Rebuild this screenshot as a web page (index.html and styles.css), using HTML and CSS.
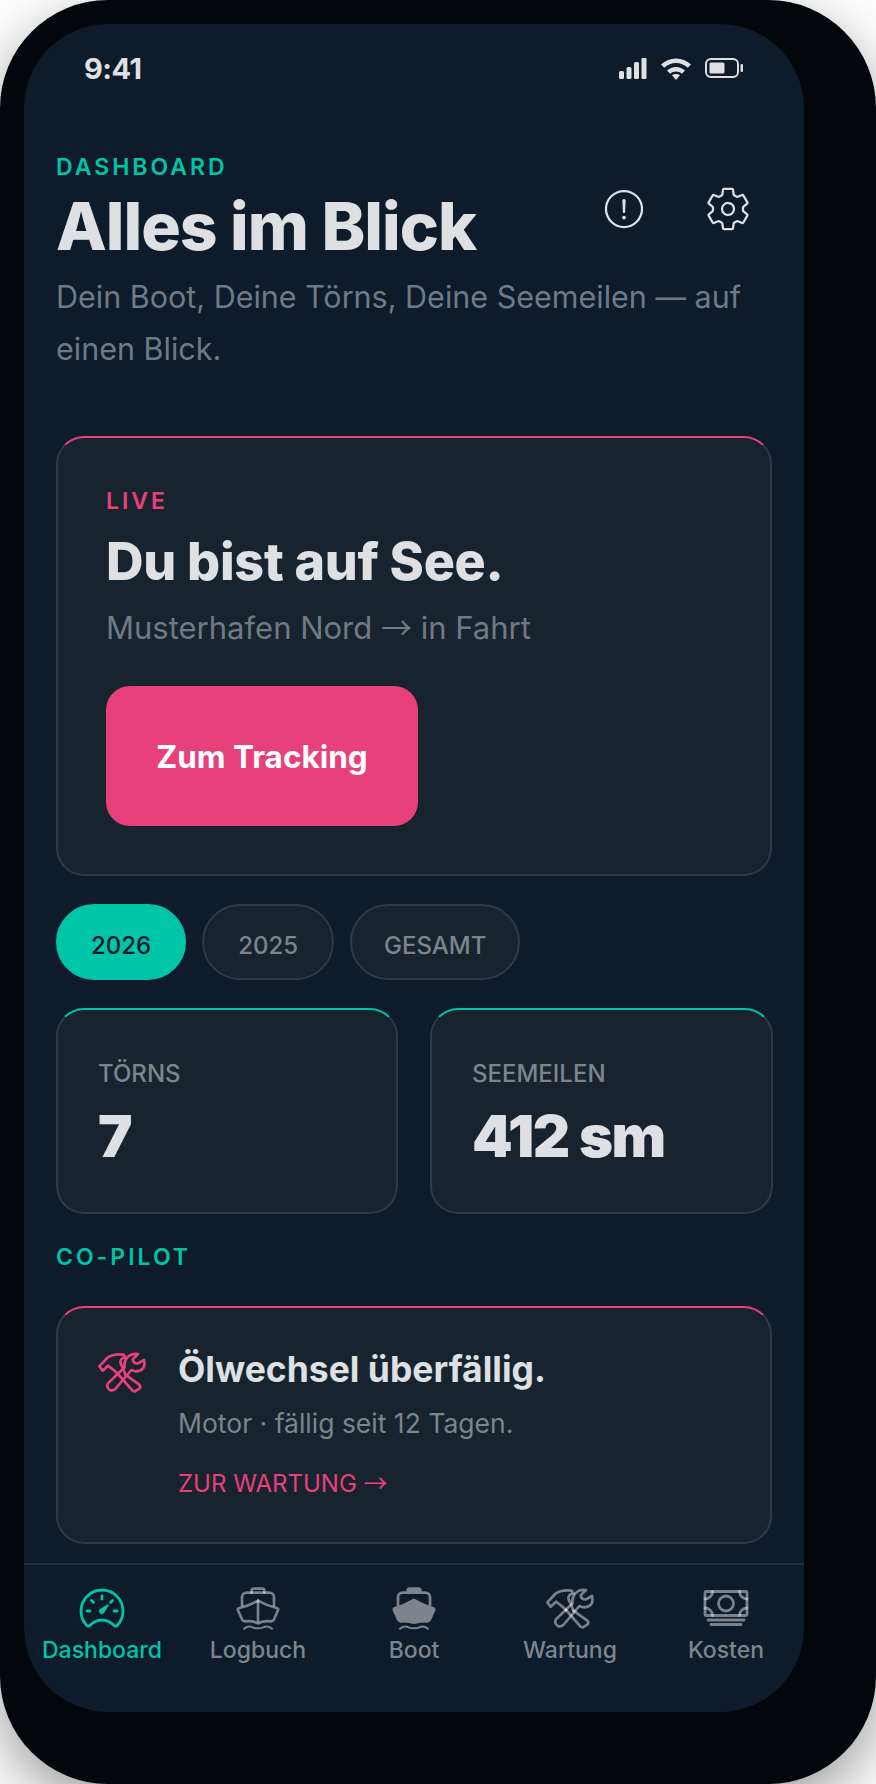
FILE: index.html
```html
<!DOCTYPE html>
<html lang="de">

<head>
  <meta charset="utf-8" />
  <meta name="viewport" content="width=device-width, initial-scale=1.0">
  <title>Dashboard</title>
  <link rel="stylesheet" href="styles.css">
</head>

<body>
  <div class="phone">
    <div class="screen">
      <div class="status-bar">
        <span class="status-time">9:41</span>
        <div class="status-icons">
          <svg class="ico-signal" viewBox="0 0 28 21"><rect x="0" y="13" width="5" height="8" rx="1.5"/><rect x="7.5" y="9" width="5" height="12" rx="1.5"/><rect x="15" y="4" width="5" height="17" rx="1.5"/><rect x="22.5" y="0" width="5" height="21" rx="1"/></svg>
          <svg class="ico-wifi" viewBox="0 0 32 24"><path d="M1 8.500C9.500 .5 22.500 .5 31 8.500L27.800 11.800C21 5.500 11 5.500 4.200 11.800Z"/><path d="M7 14.500C12 9.800 20 9.800 25 14.500L21.800 17.700C18.500 14.700 13.500 14.700 10.200 17.700Z"/><path d="M12 19.300C14.300 17.500 17.700 17.500 20 19.300L16 24Z"/></svg>
          <svg class="ico-battery" viewBox="0 0 38 20"><rect class="battery-shell" x="1" y="1" width="32" height="18" rx="5"/><rect x="4.500" y="4.500" width="15" height="11" rx="1.500"/><rect x="35.500" y="6" width="2.500" height="8" rx="1"/></svg>
        </div>
      </div>

      <div class="content">
        <div class="page-head">
          <div>
            <div class="kicker">DASHBOARD</div>
            <h1 class="page-title">Alles im Blick</h1>
          </div>
          <div class="head-actions">
            <a class="head-button">
              <svg class="ico-head" viewBox="0 0 512 512"><path d="M448 256c0-106-86-192-192-192S64 150 64 256s86 192 192 192 192-86 192-192z"/><path d="M250.260 166.050L256 288l5.730-121.950a5.740 5.740 0 00-5.790-6h0a5.740 5.740 0 00-5.680 6z"/><path class="dot" d="M256 367.910a20 20 0 1120-20 20 20 0 01-20 20z"/></svg>
            </a>
            <a class="head-button">
              <svg class="ico-head" viewBox="0 0 512 512"><path d="M262.290 192.310a64 64 0 1057.400 57.400 64.130 64.130 0 00-57.400-57.400zM416.390 256a154.340 154.340 0 01-1.530 20.790l45.210 35.460a10.810 10.810 0 012.450 13.750l-42.770 74a10.810 10.810 0 01-13.140 4.590l-44.900-18.080a16.110 16.110 0 00-15.170 1.750A164.480 164.480 0 01325 400.800a15.940 15.940 0 00-8.820 12.140l-6.730 47.890a11.080 11.080 0 01-10.680 9.170h-85.540a11.110 11.110 0 01-10.690-8.870l-6.720-47.820a16.070 16.070 0 00-9-12.220 155.300 155.300 0 01-21.460-12.570 16 16 0 00-15.110-1.710l-44.890 18.070a10.810 10.810 0 01-13.140-4.580l-42.770-74a10.800 10.800 0 012.450-13.750l38.210-30a16.050 16.050 0 006-14.080c-.36-4.170-.58-8.330-.58-12.500s.21-8.270.58-12.350a16 16 0 00-6.070-13.940l-38.190-30A10.810 10.810 0 0149.480 186l42.770-74a10.810 10.810 0 0113.140-4.590l44.900 18.080a16.110 16.110 0 0015.170-1.750A164.480 164.480 0 01187 111.200a15.940 15.940 0 008.820-12.140l6.730-47.890A11.080 11.080 0 01213.230 42h85.540a11.110 11.110 0 0110.690 8.870l6.720 47.820a16.070 16.070 0 009 12.220 155.300 155.300 0 0121.460 12.570 16 16 0 0015.110 1.710l44.890-18.070a10.810 10.810 0 0113.140 4.580l42.770 74a10.800 10.800 0 01-2.450 13.750l-38.210 30a16.050 16.050 0 00-6.100 14.080c.33 4.140.55 8.300.55 12.470z"/></svg>
            </a>
          </div>
        </div>
        <p class="page-sub">Dein Boot, Deine Törns, Deine Seemeilen — auf einen Blick.</p>

        <div class="card card-live">
          <div class="live-tag">LIVE</div>
          <h2 class="live-title">Du bist auf See.</h2>
          <p class="live-sub">Musterhafen Nord <span class="arrow">→</span> in Fahrt</p>
          <a class="live-button">Zum Tracking</a>
        </div>

        <div class="pills">
          <a class="pill pill-on">2026</a>
          <a class="pill pill-year">2025</a>
          <a class="pill pill-all">GESAMT</a>
        </div>

        <div class="stats">
          <div class="card card-stat">
            <div class="stat-label">TÖRNS</div>
            <div class="stat-value">7</div>
          </div>
          <div class="card card-stat">
            <div class="stat-label">SEEMEILEN</div>
            <div class="stat-value">412 sm</div>
          </div>
        </div>

        <div class="section-label">CO-PILOT</div>

        <div class="card card-pilot">
          <svg class="ico-pilot" viewBox="348 42 144 144"><use href="#tools"/></svg>
          <div>
            <h3 class="pilot-title">Ölwechsel überfällig.</h3>
            <p class="pilot-sub">Motor · fällig seit 12 Tagen.</p>
            <a class="pilot-link">ZUR WARTUNG <span class="arrow">→</span></a>
          </div>
        </div>
      </div>

      <div class="tabbar">
        <a class="tab tab-on">
          <svg class="ico-line" viewBox="0 0 512 512">
            <path class="dot" d="M326.100 231.900l-47.500 75.500a31 31 0 01-7 7 30.110 30.110 0 01-35-49l75.500-47.500a10.230 10.230 0 0111.700 0 10.060 10.060 0 012.300 14z"/>
            <path d="M256 64C132.300 64 32 164.200 32 287.900a223.180 223.180 0 0056.300 148.500c1.200 1.300 2.300 2.600 3.600 3.900a25.190 25.190 0 0037.100-.1 173.130 173.130 0 01254 0 25.190 25.190 0 0037.100.1l3.600-3.900A223.180 223.180 0 00480 287.900C480 164.200 379.700 64 256 64z"/>
            <path d="M256 128v32M416 288h-32M128 288H96M165.490 197.490l-22.630-22.630M346.510 197.490l22.630-22.630"/>
          </svg>
          <span>Dashboard</span>
        </a>
        <a class="tab">
          <svg class="ico-tool" viewBox="612 40 144 144">
            <path d="M665 66V60a6 6 0 016-6h26a6 6 0 016 6V66"/>
            <path d="M636 104V80a14 14 0 0114-14h68a14 14 0 0114 14V104"/>
            <path d="M684 90C670 98 645 108 626 113C623 114 623 116 624 119L636 146C638 150 640 151 645 152C660 150 672 152 684 158C696 152 708 150 723 152C728 151 730 150 732 146L744 119C745 116 745 114 742 113C723 108 698 98 684 90Z"/>
            <path d="M684 90V152"/>
            <path class="thin" d="M642 174C652 166 660 166 668 170C676 174 692 174 700 170C708 166 716 166 726 174"/>
          </svg>
          <span>Logbuch</span>
        </a>
        <a class="tab">
          <svg class="ico-tool ico-solid" viewBox="612 40 144 144">
            <path d="M665 62V60a6 6 0 016-6h26a6 6 0 016 6V62Z"/>
            <path class="hollow" d="M636 104V80a14 14 0 0114-14h68a14 14 0 0114 14V104"/>
            <path d="M684 88C670 96 645 108 626 113C623 114 623 116 624 119L636 146C638 150 640 151 645 152C660 150 672 152 684 156C696 152 708 150 723 152C728 151 730 150 732 146L744 119C745 116 745 114 742 113C723 108 698 96 684 88Z"/>
            <path class="thin hollow" d="M642 174C652 166 660 166 668 170C676 174 692 174 700 170C708 166 716 166 726 174"/>
          </svg>
          <span>Boot</span>
        </a>
        <a class="tab">
          <svg class="ico-tool" viewBox="348 42 144 144"><use href="#tools"/></svg>
          <span>Wartung</span>
        </a>
        <a class="tab">
          <svg class="ico-line" viewBox="0 0 512 512">
            <rect x="32" y="80" width="448" height="256" rx="16"/>
            <path d="M64 384h384M96 432h320"/>
            <circle cx="256" cy="208" r="80"/>
            <path d="M480 160a80 80 0 01-80-80M32 160a80 80 0 0080-80M480 256a80 80 0 00-80 80M32 256a80 80 0 0180 80"/>
          </svg>
          <span>Kosten</span>
        </a>
      </div>
    </div>
  </div>

  <!-- crossed hammer and wrench, used twice -->
  <svg class="sprite" width="0" height="0">
    <defs>
      <g id="tools">
        <path d="M468 60L452 76C452 84 460 90 468 88L486 78C492 100 480 112 462 112C456 112 452 110 448 108L400 165C392 172 382 170 378 162C374 156 376 150 380 146L428 100C424 78 440 56 468 60Z"/>
        <path d="M430 122L472 152C476 156 476 160 472 164L462 170C458 173 454 172 451 169L408 120"/>
        <path d="M408 120L395 108L378 95L362 110L352 97L370 78C378 66 400 58 425 62L430 70C415 72 410 85 422 100L430 122"/>
      </g>
    </defs>
  </svg>
</body>

</html>
```

FILE: styles.css
```css
* {
  box-sizing: border-box;
}

html,
body {
  margin: 0;
  padding: 0;
  background-color: #ffffff;
}

body {
  font-family: "Inter", "Noto Sans", sans-serif;
  color: #dee0e3;
}

h1,
h2,
h3,
p {
  margin: 0;
}

.phone {
  width: 876px;
  height: 1784px;
  padding: 24px 72px 72px 24px;
  background-color: #03060b;
  border-radius: 108px;
  box-shadow: 0 20px 60px rgba(0, 0, 0, .4);
}

.screen {
  width: 780px;
  height: 1688px;
  display: flex;
  flex-direction: column;
  overflow: hidden;
  background-color: #0d1b2a;
  border-radius: 84px;
}

.status-bar {
  height: 88px;
  flex-shrink: 0;
  display: flex;
  align-items: center;
  justify-content: space-between;
  padding: 0 61px 0 60px;
}

.status-time {
  font-size: 29px;
  font-weight: 700;
  letter-spacing: -.5px;
}

.status-icons {
  display: flex;
  align-items: center;
  gap: 13px;
  fill: #dee0e3;
}

.ico-signal {
  width: 28px;
  height: 21px;
}

.ico-wifi {
  width: 32px;
  height: 24px;
}

.ico-battery {
  width: 38px;
  height: 20px;
}

.battery-shell {
  fill: none;
  stroke: #dee0e3;
  stroke-width: 2;
}

.content {
  flex: 1;
  padding: 43px 32px 0 32px;
}

.page-head {
  display: flex;
  align-items: center;
  justify-content: space-between;
}

.kicker,
.section-label,
.live-tag {
  font-size: 23px;
  line-height: 24px;
  font-weight: 600;
  letter-spacing: 3px;
  color: #00c4a7;
}

.page-title {
  margin-top: 11px;
  font-size: 66px;
  line-height: 72px;
  font-weight: 850;
  letter-spacing: -1px;
}

.head-actions {
  display: flex;
  gap: 16px;
}

.head-button {
  width: 88px;
  height: 88px;
  display: flex;
  align-items: center;
  justify-content: center;
}

.ico-head {
  width: 48px;
  height: 48px;
  fill: none;
  stroke: #dee0e3;
  stroke-width: 24;
  stroke-linecap: round;
  stroke-linejoin: round;
}

.ico-head .dot {
  fill: #dee0e3;
  stroke: none;
}

.page-sub {
  margin-top: 9px;
  font-size: 30.5px;
  line-height: 52px;
  color: #6f7a85;
}

/* long thin arrow, line-height 0 keeps the other font from moving the baseline */
.arrow {
  font-family: "Noto Sans CJK JP", sans-serif;
  line-height: 0;
}

.card {
  background-color: #17232f;
  border: 2px solid #2f3a47;
  border-radius: 28px;
}

.card-live {
  height: 440px;
  margin-top: 61px;
  padding: 50px 48px 0;
  border-top-color: #e8407a;
}

.live-tag {
  line-height: 26px;
  color: #e8407a;
}

.live-title {
  margin-top: 17px;
  font-size: 52px;
  line-height: 62px;
  font-weight: 800;
  letter-spacing: -.3px;
}

.live-sub {
  margin-top: 15px;
  font-size: 31px;
  line-height: 40px;
  color: #6f7a85;
}

.live-button {
  width: 312px;
  height: 140px;
  margin-top: 38px;
  display: flex;
  align-items: center;
  justify-content: center;
  font-size: 31.5px;
  font-weight: 700;
  color: #ffffff;
  background-color: #e8407a;
  border-radius: 24px;
}

.pills {
  margin-top: 28px;
  display: flex;
  gap: 16px;
}

.pill {
  height: 76px;
  padding: 7px 33px 0;
  display: flex;
  align-items: center;
  justify-content: center;
  font-size: 24px;
  font-weight: 500;
  color: #7c858e;
  background-color: #17232f;
  border: 2px solid #2f3a47;
  border-radius: 38px;
}

.pill-on {
  color: #0d1b2a;
  background-color: #00c4a7;
  border-color: #00c4a7;
}

.pill-year {
  width: 132px;
}

.pill-all {
  width: 170px;
  padding: 7px 0 0;
}

.stats {
  margin-top: 28px;
  display: grid;
  grid-template-columns: 342px 343px;
  gap: 32px;
}

.card-stat {
  height: 206px;
  padding: 50px 40px 0;
  border-top-color: #00c4a7;
}

.stat-label {
  font-size: 24px;
  line-height: 28px;
  font-weight: 500;
  color: #7c858e;
}

.stat-value {
  margin-top: 12px;
  font-size: 58px;
  line-height: 72px;
  font-weight: 900;
  letter-spacing: -1.500px;
}

.section-label {
  margin-top: 31px;
}

.card-pilot {
  height: 238px;
  margin-top: 37px;
  padding: 38px 40px 0;
  display: flex;
  gap: 32px;
  border-top-color: #e8407a;
}

.ico-pilot {
  width: 48px;
  height: 48px;
  margin-top: 2px;
  flex-shrink: 0;
  fill: none;
  stroke: #e8407a;
  stroke-width: 8;
  stroke-linecap: round;
  stroke-linejoin: round;
}

.pilot-title {
  font-size: 35.5px;
  line-height: 48px;
  font-weight: 700;
}

.pilot-sub {
  margin-top: 11px;
  font-size: 26.5px;
  line-height: 36px;
  color: #7c858e;
}

.pilot-link {
  display: block;
  margin-top: 25px;
  font-size: 24px;
  line-height: 36px;
  color: #e8407a;
}

.tabbar {
  height: 149px;
  flex-shrink: 0;
  display: grid;
  grid-template-columns: repeat(5, 1fr);
  padding-top: 19px;
  border-top: 2px solid #222f3c;
}

.tab {
  display: flex;
  flex-direction: column;
  align-items: center;
  gap: 2px;
  font-size: 23px;
  line-height: 32px;
  font-weight: 500;
  color: #7c858e;
}

.tab-on {
  color: #00c4a7;
}

.ico-line {
  width: 48px;
  height: 48px;
  fill: none;
  stroke: rgba(255, 255, 255, .45);
  stroke-width: 30;
  stroke-linecap: round;
  stroke-linejoin: round;
}

.ico-tool {
  width: 48px;
  height: 48px;
  fill: none;
  stroke: rgba(255, 255, 255, .45);
  stroke-width: 8;
  stroke-linecap: round;
  stroke-linejoin: round;
}

.ico-tool .thin {
  stroke-width: 6;
}

.ico-solid {
  fill: #7c858e;
  stroke: #7c858e;
}

.ico-solid .hollow {
  fill: none;
}

.tab-on .ico-line {
  stroke: #00c4a7;
}

.tab-on .ico-line .dot {
  fill: #00c4a7;
  stroke: none;
}

.sprite {
  position: absolute;
}
```
